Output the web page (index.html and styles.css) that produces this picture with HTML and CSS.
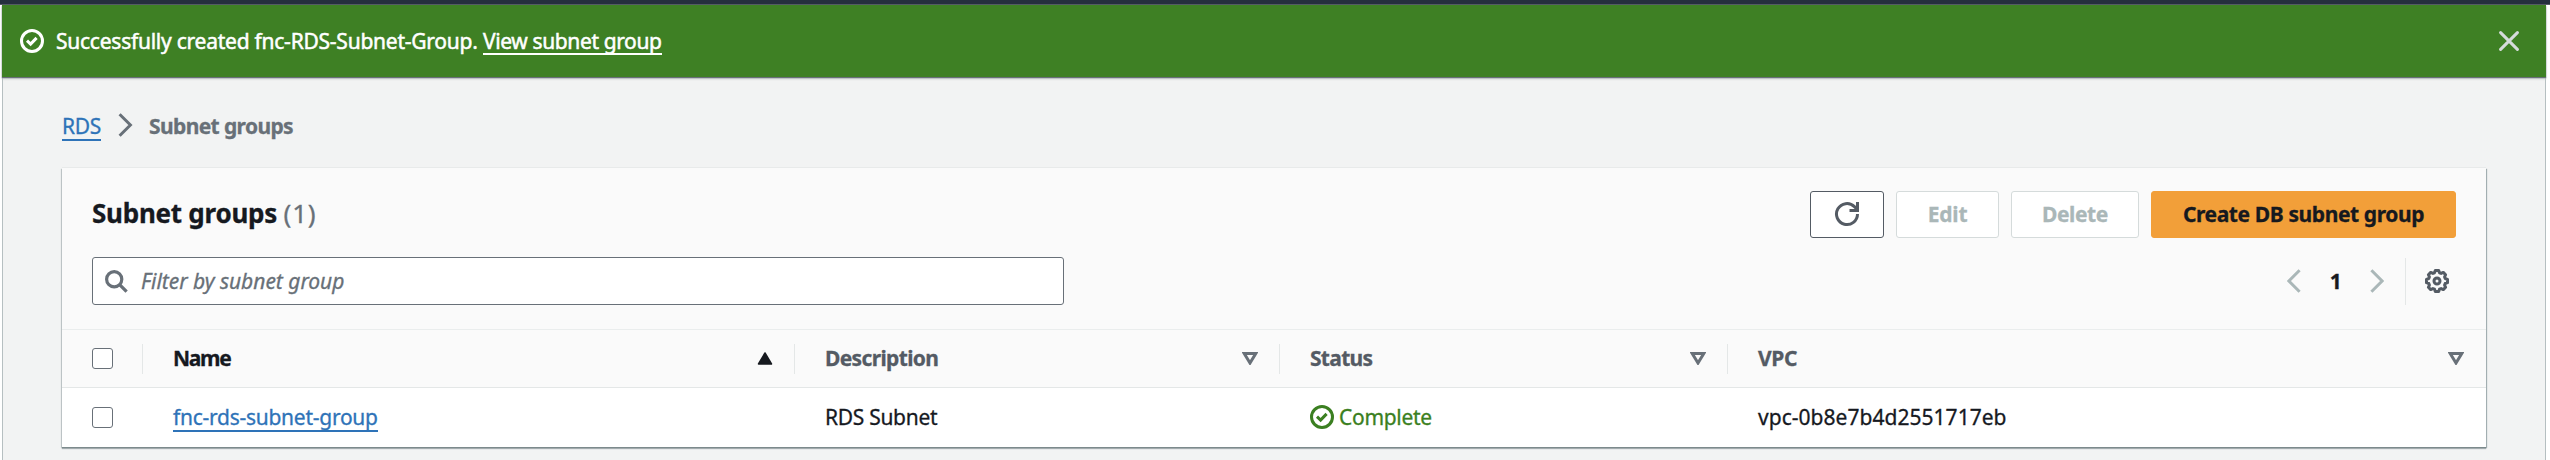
FILE: index.html
```html
<!DOCTYPE html>
<html lang="en">
<head>
<meta charset="utf-8">
<title>Subnet groups</title>
<link rel="stylesheet" href="styles.css">
</head>
<body>
<div class="topbar"></div>
<main class="page">
  <div class="flash">
    <svg class="flash-icon" width="24" height="24" viewBox="0 0 24 24" fill="none" stroke="#fff" stroke-width="3"><circle cx="12" cy="12" r="10.5"/><path d="M7 11.6l3.6 3.5 6-6.2"/></svg>
    <p class="flash-text"><span class="flash-message">Successfully created fnc-RDS-Subnet-Group.</span><a class="flash-link">View subnet group</a></p>
    <svg class="flash-close" width="20" height="20" viewBox="0 0 20 20" fill="none" stroke="#d5dbdb" stroke-width="3" stroke-linecap="round"><path d="M1.6 1.6l16.8 16.8M18.4 1.6L1.6 18.4"/></svg>
  </div>
  <nav class="crumbs">
    <a class="crumb-link">RDS</a>
    <svg class="crumb-sep" width="15" height="24" viewBox="0 0 15 24" fill="none" stroke="#687078" stroke-width="3"><path d="M1.6 1.2L12.4 12 1.6 22.8"/></svg>
    <span class="crumb-current">Subnet groups</span>
  </nav>
  <section class="panel">
    <header class="head">
      <div class="head-row">
        <h1 class="title">Subnet groups <span class="count">(1)</span></h1>
        <div class="actions">
          <button class="btn btn-refresh"><svg width="26" height="26" viewBox="0 0 26 26" fill="none" stroke="#545b64" stroke-width="3"><path d="M23.5 13A10.5 10.5 0 1 1 20.4 5.6L22.8 8M23.5 1v8.4H15.5"/></svg></button>
          <button class="btn btn-edit">Edit</button>
          <button class="btn btn-delete">Delete</button>
          <button class="btn btn-create">Create DB subnet group</button>
        </div>
      </div>
      <div class="filter-row">
        <div class="filter">
          <svg width="23" height="23" viewBox="0 0 23 23" fill="none" stroke="#687078" stroke-width="3.2"><circle cx="9.2" cy="9.2" r="7.6"/><path d="M14.6 14.6l7 7"/></svg>
          <span class="placeholder">Filter by subnet group</span>
        </div>
        <div class="pager">
          <svg width="14" height="24" viewBox="0 0 14 24" fill="none" stroke="#aab7b8" stroke-width="3"><path d="M12.6 1.2L1.9 12l10.7 10.8"/></svg>
          <span class="page-number">1</span>
          <svg width="14" height="24" viewBox="0 0 14 24" fill="none" stroke="#aab7b8" stroke-width="3"><path d="M1.4 1.2L12.1 12 1.4 22.8"/></svg>
          <span class="pager-rule"></span>
          <svg class="gear" width="24" height="24" viewBox="0 0 24 24" fill="none" stroke="#545b64" stroke-width="3" stroke-linejoin="round"><path d="M10.3 1.5h3.4l.8 2.3 1.6.6 2.2-1 2.3 2.3-1 2.2.6 1.6 2.3.8v3.4l-2.3.8-.6 1.6 1 2.2-2.3 2.3-2.2-1-1.6.6-.8 2.3h-3.4l-.8-2.3-1.6-.6-2.2 1-2.3-2.3 1-2.2-.6-1.6-2.3-.8v-3.4l2.3-.8.6-1.6-1-2.2 2.3-2.3 2.2 1 1.6-.6z"/><circle cx="12" cy="12" r="3"/></svg>
        </div>
      </div>
    </header>
    <div class="grid grid-head">
      <div class="th th-check"><span class="checkbox"></span></div>
      <div class="th th-active"><span class="th-name">Name</span><svg width="16" height="13" viewBox="0 0 16 13"><path d="M8 1l6.5 11h-13z" fill="#16191f" stroke="#16191f" stroke-width="1.5" stroke-linejoin="round"/></svg></div>
      <div class="th"><span class="th-description">Description</span><svg width="16" height="13" viewBox="0 0 16 13"><path d="M2.2 1.5h11.6L8 11z" fill="none" stroke="#687078" stroke-width="3"/></svg></div>
      <div class="th"><span class="th-status">Status</span><svg width="16" height="13" viewBox="0 0 16 13"><path d="M2.2 1.5h11.6L8 11z" fill="none" stroke="#687078" stroke-width="3"/></svg></div>
      <div class="th th-last"><span class="th-vpc">VPC</span><svg width="16" height="13" viewBox="0 0 16 13"><path d="M2.2 1.5h11.6L8 11z" fill="none" stroke="#687078" stroke-width="3"/></svg></div>
    </div>
    <div class="grid grid-row">
      <div class="td td-check"><span class="checkbox"></span></div>
      <div class="td"><a class="row-link">fnc-rds-subnet-group</a></div>
      <div class="td"><span class="description">RDS Subnet</span></div>
      <div class="td td-status"><svg width="24" height="24" viewBox="0 0 24 24" fill="none" stroke="#3b7f21" stroke-width="3"><circle cx="12" cy="12" r="10.5"/><path d="M7 11.6l3.6 3.5 6-6.2"/></svg><span class="status">Complete</span></div>
      <div class="td"><span class="vpc">vpc-0b8e7b4d2551717eb</span></div>
    </div>
  </section>
</main>
</body>
</html>
```
FILE: styles.css
```css
* { box-sizing: border-box; }
body {
  margin: 0;
  height: 460px;
  overflow: hidden;
  background: #fff;
  color: #16191f;
  font: 21px/28px "Noto Sans", "Open Sans", sans-serif;
  letter-spacing: -0.3px;
  -webkit-text-stroke: 0.3px currentColor;
}
p, h1 { margin: 0; }
svg { display: block; flex: none; }
.topbar { height: 5px; background: #252f3e; border-bottom: 1px solid #545b64; }
.page {
  height: 455px;
  margin: 0 4px 0 2px;
  background: #f2f3f3;
  box-shadow: inset 1px 0 #b6bfc1, inset -1px 0 #b6bfc1;
}
.flash {
  display: flex;
  align-items: center;
  height: 72px;
  padding: 0 27px 0 18px;
  background: #3e8024;
  color: #fff;
  box-shadow: 0 1px 1px #687078, 0 2px 2px #c4caca;
}
.flash-text { display: flex; flex: 1; gap: 6px; padding: 0 0 1px 12px; white-space: nowrap; -webkit-text-stroke: 0.5px #fff; }
.flash-message { width: 421px; letter-spacing: -0.24px; }
.flash-link { height: 28px; border-bottom: 2px solid #fff; letter-spacing: -0.38px; }
.crumbs { display: flex; align-items: center; height: 91px; padding: 7px 0 0 60px; white-space: nowrap; }
.crumb-link { width: 39px; height: 29px; border-bottom: 2px solid #2e73b8; color: #2e73b8; }
.crumb-sep { margin: 0 16px 3px 17px; }
.crumb-current { color: #687078; font-weight: 700; letter-spacing: -0.62px; }
.panel {
  width: 2424px;
  height: 279px;
  margin-left: 60px;
  background: #fff;
  box-shadow: 0 1px 1px #7c8a8c, 0 2px 1px #aab3b5, 1px 1px 1px #aab7b8, -1px 1px 1px #cfd5d5, 0 -1px #e8eaea;
}
.head { height: 162px; padding: 23px 30px 0; background: #fafafa; border-bottom: 1px solid #eaeded; }
.head-row { display: flex; align-items: center; justify-content: space-between; height: 47px; }
.title { padding-bottom: 3px; font-size: 26px; line-height: 36px; font-weight: 700; letter-spacing: -0.25px; }
.count { color: #687078; font-weight: 400; letter-spacing: 0.8px; }
.actions { display: flex; gap: 12px; }
.btn {
  display: flex;
  align-items: center;
  justify-content: center;
  height: 47px;
  padding: 0 0 1px;
  border: 1px solid #d5dbdb;
  border-radius: 3px;
  background: #fff;
  color: #aab7b8;
  font: 700 21px/28px "Noto Sans", "Open Sans", sans-serif;
  white-space: nowrap;
}
.btn-refresh { width: 74px; border-color: #545b64; }
.btn-edit { width: 103px; letter-spacing: -0.2px; }
.btn-delete { width: 128px; letter-spacing: -0.4px; }
.btn-create { width: 305px; border-color: #f29f39; background: #f29f39; color: #16191f; letter-spacing: -0.4px; }
.filter-row { display: flex; align-items: center; justify-content: space-between; margin-top: 19px; height: 48px; }
.filter {
  display: flex;
  align-items: center;
  gap: 13px;
  width: 972px;
  height: 48px;
  padding-left: 12px;
  border: 1px solid #687078;
  border-radius: 3px;
  background: #fff;
}
.placeholder { padding-bottom: 1px; color: #687078; font-style: italic; letter-spacing: -0.02px; }
.pager { display: flex; align-items: center; padding-right: 7px; }
.page-number { width: 69px; text-align: center; font-weight: 700; }
.pager-rule { width: 1px; height: 47px; margin: 0 19px 0 21px; background: #e4e7e7; }
.grid { display: grid; grid-template-columns: 81px 652px 485px 448px 758px; }
.grid-head { height: 58px; background: #fafafa; border-bottom: 1px solid #e4e7e7; }
.grid-row { height: 59px; }
.th { display: flex; align-items: center; padding-left: 30px; color: #545b64; font-weight: 700; }
.th > span:not(.checkbox) { flex: 1; padding-bottom: 2px; }
.th::after { content: ""; width: 1px; height: 30px; margin-left: 21px; background: #e4e7e7; }
.th-check::after { margin-left: 29px; }
.th-last { padding-right: 22px; }
.th-last::after { display: none; }
.th-active { color: #16191f; }
.th-name { letter-spacing: -1.3px; }
.th-description { letter-spacing: -0.65px; }
.th-status { letter-spacing: -0.7px; }
.td { display: flex; align-items: center; padding: 0 0 1px 30px; white-space: nowrap; }
.td-check { padding-bottom: 0; }
.checkbox { width: 21px; height: 21px; border: 1.5px solid #687078; border-radius: 3px; background: #fff; }
.row-link { height: 29px; border-bottom: 2px solid #2e73b8; color: #2e73b8; letter-spacing: -0.26px; }
.td-status { gap: 5px; color: #3b7f21; }
.vpc { letter-spacing: 0.03px; }
```
